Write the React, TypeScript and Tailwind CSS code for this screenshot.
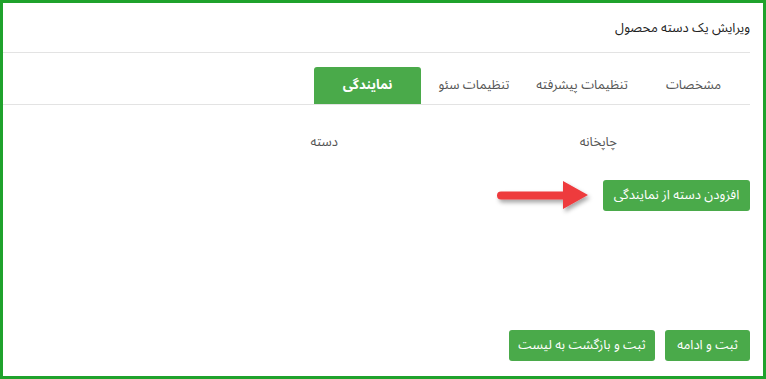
import React from 'react';

const tabs = [
    { label: 'مشخصات', width: 'w-[113px]' },
    { label: 'تنظیمات پیشرفته', width: 'w-[110px]' },
    { label: 'تنظیمات سئو', width: 'w-[106px]' },
];

const RedArrow = () => (
    <svg width="100" height="40" viewBox="0 0 100 40" className="block">
        <defs>
            <filter id="arrowShadow" x="-20%" y="-40%" width="140%" height="180%">
                <feDropShadow dx="2" dy="3" stdDeviation="2" floodColor="#000" floodOpacity="0.35" />
            </filter>
        </defs>
        <g filter="url(#arrowShadow)">
            <path d="M6 15.5 H68 V5 L93 19 L68 33 V23.5 H6 A4 4 0 0 1 6 15.5 Z" fill="#ee3a3e" />
        </g>
    </svg>
);

export default function App() {
    return (
        <div
            dir="rtl"
            className="w-[766px] h-[379px] bg-white border-[3px] border-[#1fa22c] text-[#333] overflow-hidden"
            style={{ fontFamily: "'Noto Sans Arabic', 'DejaVu Sans', sans-serif" }}
        >
            <div className="pr-[13px] h-full flex flex-col">
                {/* header */}
                <div className="h-[50px] border-b border-[#e3e3e3] flex items-center">
                    <h1 className="text-[13px] text-[#222] pt-[3px]">ویرایش یک دسته محصول</h1>
                </div>

                {/* tabs */}
                <div className="mt-[14px] flex items-end border-b border-[#e3e3e3]">
                    {tabs.map((t) => (
                        <div key={t.label} className={`${t.width} h-[37px] flex items-center justify-center text-[13px] text-[#555]`}>
                            {t.label}
                        </div>
                    ))}
                    <div className="w-[107px] h-[37px] flex items-center justify-center bg-[#4aaa4a] rounded-t-[3px] text-white text-[13px] font-bold">
                        نمایندگی
                    </div>
                </div>

                {/* table header */}
                <div className="flex mt-[28px] text-[13px] text-[#555]">
                    <div className="w-[133px]" />
                    <div className="w-[279px]">چاپخانه</div>
                    <div>دسته</div>
                </div>

                {/* add button with arrow */}
                <div className="flex items-center mt-[23px] gap-[8px]">
                    <button className="w-[147px] h-[31px] bg-[#4aaa4a] text-white text-[13px] rounded-[3px]">
                        افزودن دسته از نمایندگی
                    </button>
                    <RedArrow />
                </div>

                {/* footer buttons */}
                <div className="mt-auto mb-[15px] flex gap-[10px]">
                    <button className="w-[85px] h-[31px] bg-[#4aaa4a] text-white text-[13px] rounded-[3px]">
                        ثبت و ادامه
                    </button>
                    <button className="w-[146px] h-[31px] bg-[#4aaa4a] text-white text-[13px] rounded-[3px]">
                        ثبت و بازگشت به لیست
                    </button>
                </div>
            </div>
        </div>
    );
}
